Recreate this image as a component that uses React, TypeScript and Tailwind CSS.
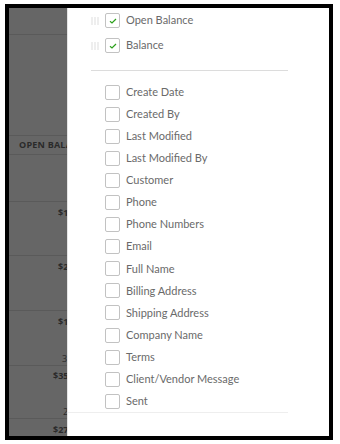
import React from 'react';

// --- Data ---
const pinned = ['Open Balance', 'Balance'];
const others = [
    'Create Date', 'Created By', 'Last Modified', 'Last Modified By', 'Customer', 'Phone',
    'Phone Numbers', 'Email', 'Full Name', 'Billing Address', 'Shipping Address',
    'Company Name', 'Terms', 'Client/Vendor Message', 'Sent',
];

// --- Small pieces ---
const DragHandle = () => (
    <svg width="8" height="8" viewBox="0 0 8 8" className="shrink-0">
        {[0, 1, 2].map(c => [0, 1, 2, 3].map(r => (
            <rect key={`${c}-${r}`} x={c * 3 + 0.5} y={r * 2 + 0.5} width="1" height="1" fill="#bdbdbd" />
        )))}
    </svg>
);

const Checkbox = ({ checked }: { checked?: boolean }) => (
    <div className="w-[15px] h-[15px] shrink-0 rounded-[2px] border border-[#c2c2c2] bg-white flex items-center justify-center">
        {checked && (
            <svg width="8" height="6" viewBox="0 0 8 6">
                <path d="M1 3.2 L3 5 L7 1" fill="none" stroke="#2ca01c" strokeWidth="1.2" />
            </svg>
        )}
    </div>
);

// --- Table behind the overlay (clipped on purpose by the drawer) ---
const TableBehind = () => (
    <div className="w-[58px] shrink-0 bg-[#666666] overflow-hidden flex flex-col text-[#2a2a2a] font-['Open_Sans',sans-serif] text-[9px] font-bold">
        <div className="h-[27px] border-b border-[#5a5a5a]" />
        <div className="h-[103px] border-b border-[#5a5a5a]" />
        <div className="h-[19px] border-b border-[#5a5a5a] flex items-center pl-[10px] whitespace-nowrap tracking-wide">OPEN BALA</div>
        <div className="h-[48px] border-b border-[#5a5a5a]" />
        <div className="h-[55px] border-b border-[#5a5a5a] pt-[4px] pl-[49px] whitespace-nowrap">$1</div>
        <div className="h-[55px] border-b border-[#5a5a5a] pt-[4px] pl-[49px] whitespace-nowrap">$2</div>
        <div className="h-[55px] border-b border-[#5a5a5a] pt-[4px] pl-[49px] whitespace-nowrap flex flex-col">
            <span>$1</span>
            <span className="mt-[24px] pl-[4px] font-normal">3</span>
        </div>
        <div className="h-[53px] border-b border-[#5a5a5a] pt-[3px] pl-[44px] whitespace-nowrap flex flex-col">
            <span>$35</span>
            <span className="mt-[23px] pl-[10px] font-normal">2</span>
        </div>
        <div className="pt-[4px] pl-[44px] whitespace-nowrap">$27</div>
    </div>
);

// --- Column chooser panel ---
const ColumnPanel = () => (
    <div className="flex-1 bg-white border-l border-[#e4e4e4] flex flex-col font-['Lato',sans-serif] text-[11px] text-[#6a6a6a]">
        <div className="w-[220px] flex flex-col">
            {pinned.map(label => (
                <div key={label} className="h-[25px] flex items-center pl-[23px]">
                    <DragHandle />
                    <div className="ml-[6px]"><Checkbox checked /></div>
                    <span className="ml-[6px]">{label}</span>
                </div>
            ))}
            <div className="mt-[12px] ml-[23px] h-px bg-[#dcdcdc]" />
            <div className="mt-[10px] h-[332px] overflow-hidden border-b border-[#eeeeee]">
                {others.map(label => (
                    <div key={label} className="h-[22.1px] flex items-center pl-[37px]">
                        <Checkbox />
                        <span className="ml-[6px] whitespace-nowrap">{label}</span>
                    </div>
                ))}
            </div>
        </div>
    </div>
);

export default function App() {
    return (
        <div className="w-[340px] h-[444px] bg-white pt-[4px] pl-[5px]">
            <div className="w-[328px] h-[436px] border-4 border-black flex overflow-hidden">
                <TableBehind />
                <ColumnPanel />
            </div>
        </div>
    );
}
